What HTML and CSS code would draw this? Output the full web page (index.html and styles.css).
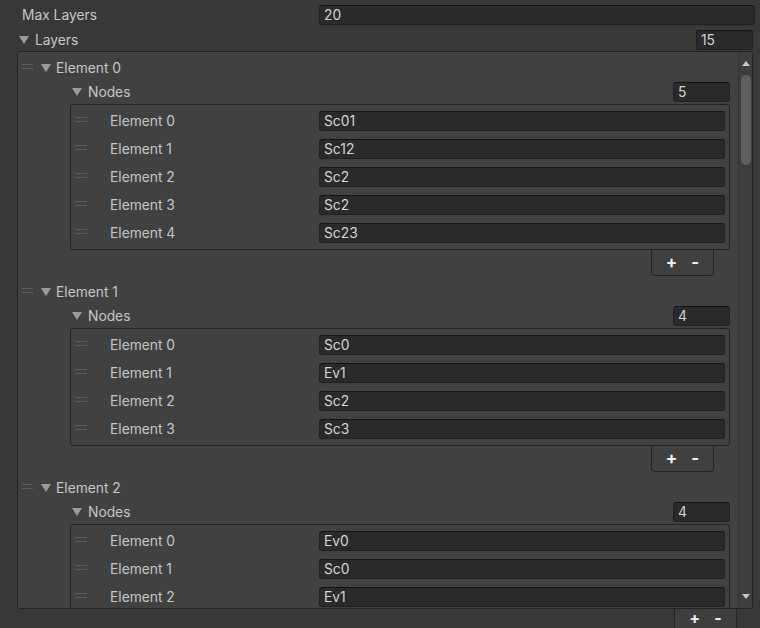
FILE: index.html
```html
<!DOCTYPE html>
<html lang="en">
<head>
    <meta charset="UTF-8">
    <title>Inspector</title>
    <link rel="stylesheet" href="styles.css">
</head>
<body>
    <div class="inspector">
        <div class="prop-row">
            <span class="prop-label">Max Layers</span>
            <div class="field field-wide">20</div>
        </div>
        <div class="prop-row">
            <span class="foldout"></span>
            <span class="prop-label layers-label">Layers</span>
            <div class="field field-size">15</div>
        </div>

        <div class="list-box">
            <div class="list-content">

                <div class="element">
                    <div class="element-head">
                        <span class="handle"></span>
                        <span class="foldout"></span>
                        <span class="head-label">Element 0</span>
                    </div>
                    <div class="nodes-head">
                        <span class="foldout"></span>
                        <span class="head-label">Nodes</span>
                        <div class="field field-size">5</div>
                    </div>
                    <div class="nodes-box">
                        <div class="node-row"><span class="handle"></span><span class="node-label">Element 0</span><div class="field">Sc01</div></div>
                        <div class="node-row"><span class="handle"></span><span class="node-label">Element 1</span><div class="field">Sc12</div></div>
                        <div class="node-row"><span class="handle"></span><span class="node-label">Element 2</span><div class="field">Sc2</div></div>
                        <div class="node-row"><span class="handle"></span><span class="node-label">Element 3</span><div class="field">Sc2</div></div>
                        <div class="node-row"><span class="handle"></span><span class="node-label">Element 4</span><div class="field">Sc23</div></div>
                    </div>
                    <div class="footer"><span>+</span><span>-</span></div>
                </div>

                <div class="element">
                    <div class="element-head">
                        <span class="handle"></span>
                        <span class="foldout"></span>
                        <span class="head-label">Element 1</span>
                    </div>
                    <div class="nodes-head">
                        <span class="foldout"></span>
                        <span class="head-label">Nodes</span>
                        <div class="field field-size">4</div>
                    </div>
                    <div class="nodes-box">
                        <div class="node-row"><span class="handle"></span><span class="node-label">Element 0</span><div class="field">Sc0</div></div>
                        <div class="node-row"><span class="handle"></span><span class="node-label">Element 1</span><div class="field">Ev1</div></div>
                        <div class="node-row"><span class="handle"></span><span class="node-label">Element 2</span><div class="field">Sc2</div></div>
                        <div class="node-row"><span class="handle"></span><span class="node-label">Element 3</span><div class="field">Sc3</div></div>
                    </div>
                    <div class="footer"><span>+</span><span>-</span></div>
                </div>

                <div class="element">
                    <div class="element-head">
                        <span class="handle"></span>
                        <span class="foldout"></span>
                        <span class="head-label">Element 2</span>
                    </div>
                    <div class="nodes-head">
                        <span class="foldout"></span>
                        <span class="head-label">Nodes</span>
                        <div class="field field-size">4</div>
                    </div>
                    <!-- rest of this list is scrolled out of view -->
                    <div class="nodes-box nodes-clipped">
                        <div class="node-row"><span class="handle"></span><span class="node-label">Element 0</span><div class="field">Ev0</div></div>
                        <div class="node-row"><span class="handle"></span><span class="node-label">Element 1</span><div class="field">Sc0</div></div>
                        <div class="node-row"><span class="handle"></span><span class="node-label">Element 2</span><div class="field">Ev1</div></div>
                    </div>
                </div>

            </div>
            <div class="scrollbar">
                <span class="arrow-up"></span>
                <span class="thumb"></span>
                <span class="track-fill"></span>
                <span class="arrow-down"></span>
            </div>
        </div>
        <div class="footer footer-outer"><span>+</span><span>-</span></div>
    </div>
</body>
</html>
```

FILE: styles.css
```css
html, body {
    margin: 0;
    height: 100%;
    overflow: hidden;
}
body {
    background-color: #383838;
    font-family: Inter, 'Noto Sans', sans-serif;
    font-size: 13.8px;
    color: #c6c6c6;
}
.inspector {
    padding: 0 7px 0 17px;
}

/* top level properties */
.prop-row {
    display: flex;
    align-items: center;
    height: 20px;
    margin-top: 5px;
}
.prop-label {
    padding-left: 5px;
    width: 297px;
}
.prop-row .foldout {
    margin-left: 2px;
}
.layers-label {
    padding-left: 6px;
    flex: 1;
}
.field {
    box-sizing: border-box;
    height: 20px;
    line-height: 19px;
    padding-left: 4px;
    background-color: #2a2a2a;
    border: 1px solid #212121;
    border-top-color: #141414;
    border-radius: 3px;
    color: #d4d4d4;
    flex: 1;
    white-space: nowrap;
}
.field-wide {
    margin-right: -2px;
}
.field-size {
    flex: none;
    width: 57px;
    margin-left: auto;
}

/* foldout arrow */
.foldout {
    width: 0;
    height: 0;
    border-left: 5px solid transparent;
    border-right: 5px solid transparent;
    border-top: 8px solid #9b9b9b;
    flex: none;
}

/* drag handle */
.handle {
    box-sizing: border-box;
    width: 11px;
    height: 5px;
    border-top: 1px solid #5c5c5c;
    border-bottom: 1px solid #5c5c5c;
    flex: none;
    margin-top: -3px;
}

/* reorderable list */
.list-box {
    display: flex;
    margin-top: 1px;
    height: 558px;
    box-sizing: border-box;
    border: 1px solid #232323;
    border-radius: 3px;
    background-color: #414141;
    overflow: hidden;
}
.list-content {
    flex: 1;
    padding-top: 4px;
    overflow: hidden;
}
.element {
    display: flex;
    flex-direction: column;
    padding-right: 8px;
    margin-bottom: 4px;
}
.element-head,
.nodes-head {
    display: flex;
    align-items: center;
    height: 24px;
}
.element-head {
    padding-left: 4px;
}
.element-head .foldout {
    margin-left: 8px;
}
.head-label {
    margin-left: 5px;
}
.nodes-head {
    padding-left: 54px;
}
.nodes-head .head-label {
    margin-left: 6px;
}
.nodes-box {
    margin-left: 52px;
    padding: 2px 0;
    border: 1px solid #242424;
    border-radius: 3px;
    background-color: #414141;
}
.nodes-clipped {
    padding-bottom: 40px;
}
.node-row {
    display: flex;
    align-items: center;
    height: 28px;
    padding-left: 4px;
    padding-right: 4px;
}
.node-row .handle {
    width: 12px;
}
.node-label {
    margin-left: 23px;
    width: 209px;
    flex: none;
}

/* add / remove footer */
.footer {
    align-self: flex-end;
    display: flex;
    align-items: center;
    justify-content: center;
    gap: 14px;
    width: 63px;
    height: 26px;
    box-sizing: border-box;
    margin-right: 16px;
    border: 1px solid #242424;
    border-top: none;
    border-radius: 0 0 4px 4px;
    background-color: #404040;
    color: #f0f0f0;
    font-size: 17px;
    font-weight: 700;
    padding-bottom: 2px;
}
.footer-outer {
    margin-left: auto;
    margin-right: 16px;
    background-color: #3e3e3e;
    font-size: 16px;
    padding-bottom: 0;
    padding-top: 2px;
    height: 32px;
    line-height: 14px;
    align-items: flex-start;
}

/* scrollbar */
.scrollbar {
    width: 13px;
    flex: none;
    display: flex;
    flex-direction: column;
    align-items: center;
    border-left: 1px solid #353535;
    background-color: #3e3e3e;
}
.arrow-up,
.arrow-down {
    width: 0;
    height: 0;
    border-left: 4px solid transparent;
    border-right: 4px solid transparent;
}
.arrow-up {
    margin-top: 9px;
    border-bottom: 5px solid #c8c8c8;
}
.arrow-down {
    margin-bottom: 9px;
    border-top: 5px solid #c8c8c8;
}
.thumb {
    width: 10px;
    height: 90px;
    margin-top: 9px;
    border-radius: 5px;
    background-color: #5e5e5e;
}
.track-fill {
    flex: 1;
}
```
